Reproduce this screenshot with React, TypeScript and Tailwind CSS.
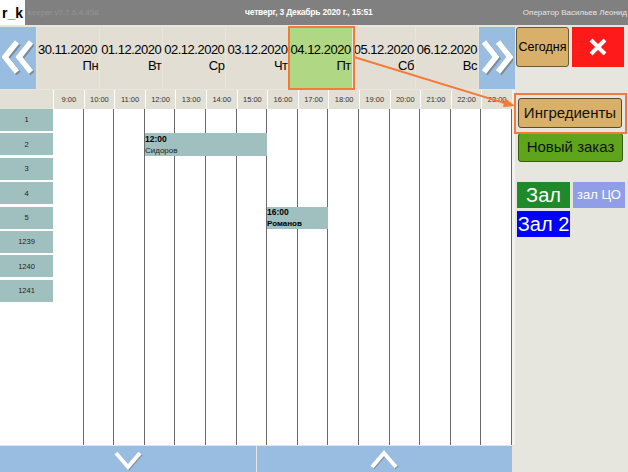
import React from 'react';

const days = [
  { date: '30.11.2020', day: 'Пн' },
  { date: '01.12.2020', day: 'Вт' },
  { date: '02.12.2020', day: 'Ср' },
  { date: '03.12.2020', day: 'Чт' },
  { date: '04.12.2020', day: 'Пт', active: true },
  { date: '05.12.2020', day: 'Сб' },
  { date: '06.12.2020', day: 'Вс' },
];

const hours = ['9:00', '10:00', '11:00', '12:00', '13:00', '14:00', '15:00', '16:00', '17:00', '18:00', '19:00', '20:00', '21:00', '22:00', '23:00'];
const tables = ['1', '2', '3', '4', '5', '1239', '1240', '1241'];

function DoubleChevron({ dir }: { dir: 'left' | 'right' }) {
  const pts = dir === 'left'
    ? ['15,2 3,17 15,32', '29,2 17,17 29,32']
    : ['3,2 15,17 3,32', '17,2 29,17 17,32'];
  return (
    <svg width="32" height="36" viewBox="0 0 32 36">
      {pts.map(p => (
        <polyline key={p + 's'} points={p} transform="translate(1.5,1.5)" fill="none" stroke="#7d8b99" strokeWidth="5.5" />
      ))}
      {pts.map(p => (
        <polyline key={p} points={p} fill="none" stroke="#ffffff" strokeWidth="5.5" />
      ))}
    </svg>
  );
}

function Chevron({ dir }: { dir: 'up' | 'down' }) {
  const p = dir === 'down' ? '3,4 15,18 27,4' : '3,18 15,4 27,18';
  return (
    <svg width="30" height="22" viewBox="0 0 30 22">
      <polyline points={p} transform="translate(1,1)" fill="none" stroke="#8896a4" strokeWidth="4" />
      <polyline points={p} fill="none" stroke="#ffffff" strokeWidth="4" />
    </svg>
  );
}

export default function App() {
  return (
    <div className="relative flex h-[472px] w-[628px] flex-col overflow-hidden bg-[#e6e5de] font-['Liberation_Sans',Arial,sans-serif] text-black">
      {/* Top bar */}
      <div className="flex h-[25px] shrink-0 items-center bg-[#808080]">
        <div className="flex h-full w-[25px] items-center justify-center bg-white text-[14px] font-bold leading-none">
          r<span className="text-[#2a8a2a]">_</span>k
        </div>
        <div className="ml-[3px] w-[150px] text-[8px] text-[#959595]">keeper v7.7.6.4.458</div>
        <div className="ml-[67px] text-[8.5px] font-bold tracking-[-0.2px] text-white">четверг, 3 Декабрь 2020 г., 15:51</div>
        <div className="ml-auto whitespace-nowrap pr-[1px] text-[8px] text-[#e6e6e6]">Оператор Васильев Леонид</div>
      </div>

      <div className="flex flex-1 pt-[2px]">
        {/* Main column */}
        <div className="flex w-[516px] flex-col">
          {/* Date row */}
          <div className="flex h-[62px] gap-[1px]">
            <button className="flex w-[36px] shrink-0 items-center justify-center bg-[#98bde0]">
              <DoubleChevron dir="left" />
            </button>
            {days.map(d => (
              <div
                key={d.date}
                className={`flex min-w-0 flex-1 flex-col justify-center overflow-hidden pl-[1px] pr-[1px] text-[13px] leading-[16px] tracking-[-0.5px] ${
                  d.active ? 'bg-[#afd784]' : 'bg-[#e2ded4]'
                }`}
              >
                <span className="whitespace-nowrap">{d.date}</span>
                <span className="self-end">{d.day}</span>
              </div>
            ))}
            <button className="flex w-[36px] shrink-0 items-center justify-center bg-[#98bde0]">
              <DoubleChevron dir="right" />
            </button>
          </div>

          {/* Schedule */}
          <div className="mt-[1px] flex flex-1">
            <div className="flex w-[512px] flex-col bg-white">
              <div className="flex h-[19px] bg-[#e2dfd4]">
                <div className="w-[53px]" />
                {hours.map(h => (
                  <div key={h} className="flex flex-1 items-center justify-center border-l border-white text-[7.5px] text-[#333]">
                    {h}
                  </div>
                ))}
              </div>
              <div className="flex flex-1">
                <div className="flex w-[53px] flex-col">
                  {tables.map(t => (
                    <div key={t} className="h-[24.4px] pb-[2.4px]">
                      <div className="flex h-full items-center justify-center bg-[#a0c0bf] text-[7.5px] text-[#222]">{t}</div>
                    </div>
                  ))}
                </div>
                <div className="relative flex flex-1">
                  {hours.map(h => (
                    <div key={h} className="flex-1 border-r border-[#6a6a6a]" />
                  ))}
                  <div className="absolute left-[92px] top-[24px] flex h-[23px] w-[122px] flex-col justify-center bg-[#a0c0bf] leading-[11px]">
                    <span className="text-[8.5px] font-bold">12:00</span>
                    <span className="text-[8px] text-[#222]">Сидоров</span>
                  </div>
                  <div className="absolute left-[214px] top-[98px] flex h-[22px] w-[61px] flex-col justify-center bg-[#a0c0bf] leading-[11px]">
                    <span className="text-[8.5px] font-bold">16:00</span>
                    <span className="text-[8px] font-bold">Романов</span>
                  </div>
                </div>
              </div>
            </div>
            <div className="flex-1 bg-[#f2f2ee]" />
          </div>

          {/* Scroll buttons */}
          <div className="mt-[1px] flex h-[26px] w-[512px] gap-[1px]">
            <button className="flex flex-1 items-start justify-center bg-[#98bde0] pt-[3px]">
              <Chevron dir="down" />
            </button>
            <button className="flex flex-1 items-start justify-center bg-[#98bde0] pt-[3px]">
              <Chevron dir="up" />
            </button>
          </div>
        </div>

        {/* Right panel */}
        <div className="flex flex-1 flex-col pl-[1px] pr-[3px]">
          <div className="flex gap-[3px]">
            <button className="h-[40px] w-[53px] rounded-[3px] border border-[#6b5a3a] bg-[#d8b06a] text-[12.5px]">Сегодня</button>
            <button className="flex h-[40px] w-[52px] items-center justify-center bg-[#ff1a1a]">
              <svg width="18" height="18" viewBox="0 0 18 18">
                <path d="M2 2 L16 16 M16 2 L2 16" stroke="#ffffff" strokeWidth="4" />
              </svg>
            </button>
          </div>
          <button className="ml-[2px] mt-[31px] h-[30px] w-[104px] rounded-[3px] border border-[#5a4a30] bg-[#d8b06a] text-[15px] text-[#111]">
            Ингредиенты
          </button>
          <button className="ml-[2px] mt-[5px] h-[29px] w-[105px] rounded-[3px] border border-[#3a5a1a] bg-[#5ea51c] text-[15px] text-[#111]">
            Новый заказ
          </button>
          <div className="ml-[1px] mt-[20px] flex gap-[3px]">
            <div className="flex h-[26px] w-[53px] items-center justify-center bg-[#1e8a2a] text-[20px] text-white">Зал</div>
            <div className="flex h-[26px] w-[52px] items-center justify-center bg-[#8f9ee6] text-[13px] text-white">зал ЦО</div>
          </div>
          <div className="ml-[1px] mt-[3px] flex h-[26px] w-[53px] items-center justify-center bg-[#0000ff] text-[20px] text-white">
            Зал 2
          </div>
        </div>
      </div>

      {/* Annotation overlay */}
      <svg className="pointer-events-none absolute left-0 top-0" width="628" height="472">
        <rect x="289" y="27" width="65" height="62" fill="none" stroke="#f47a38" strokeWidth="2" />
        <rect x="515" y="94" width="111" height="39" fill="none" stroke="#f47a38" strokeWidth="2" />
        <line x1="354" y1="57" x2="511" y2="105" stroke="#f47a38" strokeWidth="2" />
        <polygon points="515,106 505,98 503,107" fill="#f47a38" />
      </svg>
    </div>
  );
}
